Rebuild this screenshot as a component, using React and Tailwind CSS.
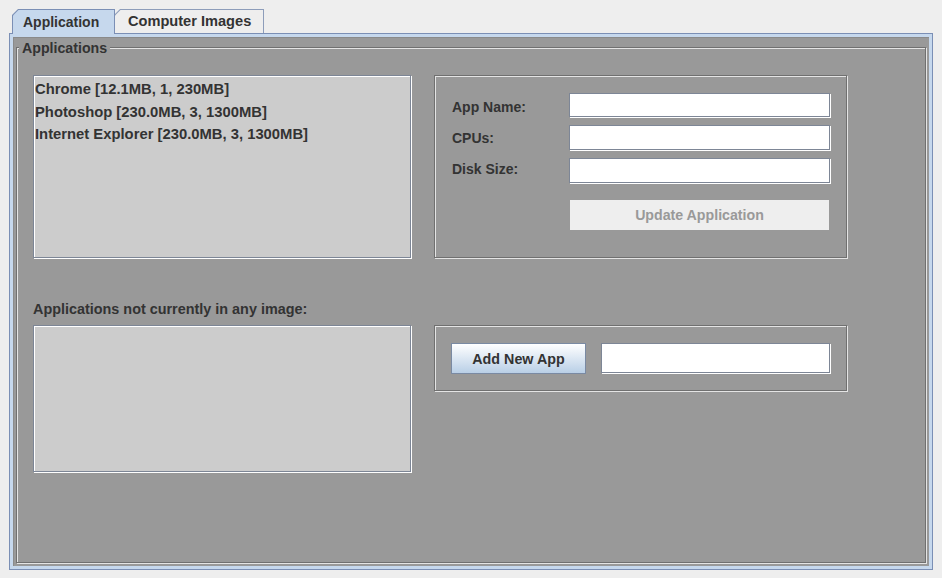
import React from "react";

const etched = "border border-[#707070] shadow-[1px_1px_0_#e4e4e4,inset_1px_1px_0_#e4e4e4]";
const fieldBorder = "border border-[#7d8696] shadow-[1px_1px_0_#ffffff,inset_1px_1px_0_#ffffff]";

function Tab({ label, selected, className }) {
  return (
    <div
      className={
        selected
          ? `relative z-10 -mb-px h-[25px] bg-[#7b8fb5] pt-px px-px [clip-path:polygon(6px_0,100%_0,100%_100%,0_100%,0_6px)] ${className}`
          : `relative h-[24px] bg-[#8d9dba] pt-px px-px [clip-path:polygon(6px_0,100%_0,100%_100%,0_100%,0_6px)] ${className}`
      }
    >
      <div
        className={
          selected
            ? "h-full bg-[#c6d8ed] [clip-path:polygon(5.5px_0,100%_0,100%_100%,0_100%,0_5.5px)] flex items-center"
            : "h-full bg-[#eeeeee] [clip-path:polygon(5.5px_0,100%_0,100%_100%,0_100%,0_5.5px)] flex items-center"
        }
      >
        {label}
      </div>
    </div>
  );
}

function Field({ className }) {
  return <div className={`bg-white ${fieldBorder} ${className}`} />;
}

export default function App() {
  return (
    <div className="w-[942px] h-[578px] bg-[#eeeeee] overflow-hidden pt-[9px] px-[9px] font-['Liberation_Sans',Arial,sans-serif] font-bold text-[#333333]">
      {/* tabs */}
      <div className="flex items-end pl-[3px] h-[24px]">
        <Tab label={<span className="pl-[10px] text-[14px]">Application</span>} selected className="w-[103px]" />
        <Tab label={<span className="pl-[13px] text-[14.6px]">Computer Images</span>} className="w-[150px] -ml-px" />
      </div>
      {/* content */}
      <div className="h-[537px] w-[924px] border border-[#7b8fb5] bg-[#c6d8ed] p-[3px]">
        <div className="h-full w-full bg-[#999999] border-l border-t border-[#8a8a8a] flex flex-col pt-[9px] pl-[2px] pr-[3px] pb-[3px]">
          <div className={`relative flex-1 ${etched}`}>
            <div className="absolute left-[2px] -top-[8px] px-[3px] bg-[#999999] text-[14.2px] leading-[17px]">
              Applications
            </div>
            <div className="flex gap-[23px] pl-[16px] pt-[27px]">
              {/* left column */}
              <div className="w-[378px] flex flex-col">
                <div className={`h-[183px] bg-[#cccccc] ${fieldBorder} shadow-[1px_1px_0_#f2f2f2,inset_1px_1px_0_#e0e0e0] pl-[1px] pt-[2px] text-[14.8px] leading-[22.5px]`}>
                  <div>Chrome [12.1MB, 1, 230MB]</div>
                  <div>Photoshop [230.0MB, 3, 1300MB]</div>
                  <div>Internet Explorer [230.0MB, 3, 1300MB]</div>
                </div>
                <div className="mt-[43px] h-[17px] leading-[17px] text-[14.4px]">
                  Applications not currently in any image:
                </div>
                <div className={`mt-[7px] h-[147px] bg-[#cccccc] ${fieldBorder} shadow-[1px_1px_0_#f2f2f2,inset_1px_1px_0_#e0e0e0]`} />
              </div>
              {/* right column */}
              <div className="w-[413px] flex flex-col">
                <div className={`h-[183px] ${etched} pl-[17px] pt-[17px] flex flex-col gap-[8px]`}>
                  <div className="flex items-center h-[24px]">
                    <div className="w-[117px] text-[14px] pt-[5px]">App Name:</div>
                    <Field className="w-[261px] h-[24px]" />
                  </div>
                  <div className="flex items-center h-[24px]">
                    <div className="w-[117px] text-[14px] pt-[3px]">CPUs:</div>
                    <Field className="w-[261px] h-[25px]" />
                  </div>
                  <div className="flex items-center h-[25px] mt-[1px]">
                    <div className="w-[117px] text-[14px] pb-[3px]">Disk Size:</div>
                    <Field className="w-[261px] h-[25px]" />
                  </div>
                  <div className="mt-[9px] ml-[118px] w-[259px] h-[30px] bg-[#eeeeee] text-[#999999] text-[14.2px] flex items-center justify-center pt-[2px]">
                    Update Application
                  </div>
                </div>
                <div className={`mt-[67px] h-[66px] ${etched} pl-[16px] flex items-center`}>
                  <div className="w-[135px] h-[31px] border border-[#7a8aa3] bg-gradient-to-b from-[#ffffff] to-[#b9cfe6] flex items-center justify-center text-[14.3px] pt-[3px]">
                    Add New App
                  </div>
                  <Field className="ml-[15px] w-[229px] h-[30px]" />
                </div>
              </div>
            </div>
          </div>
        </div>
      </div>
    </div>
  );
}
